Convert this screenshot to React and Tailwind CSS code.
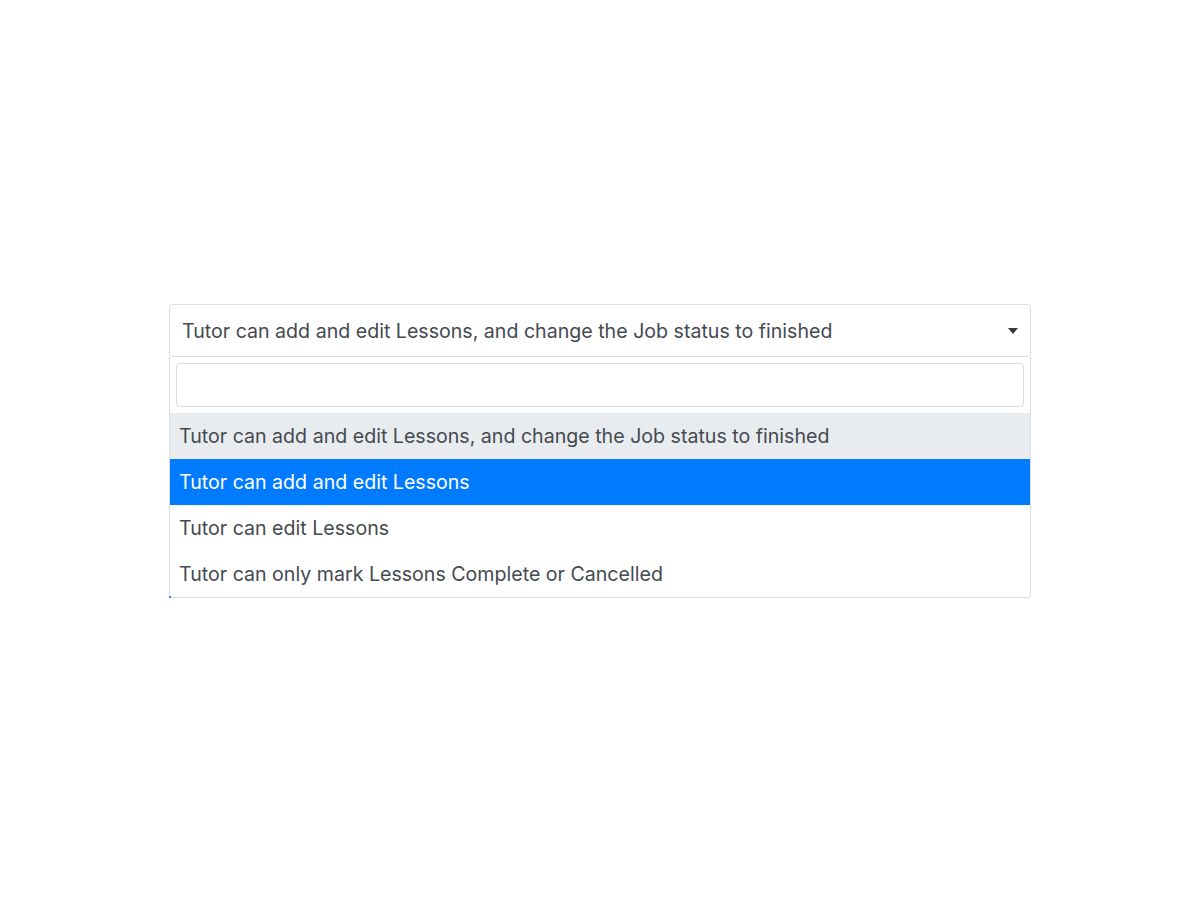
export default function App() {
  const options = [
    { t: "Tutor can add and edit Lessons, and change the Job status to finished", s: "grey" },
    { t: "Tutor can add and edit Lessons", s: "blue" },
    { t: "Tutor can edit Lessons", s: "" },
    { t: "Tutor can only mark Lessons Complete or Cancelled", s: "" },
  ];
  return (
    <div className="min-h-[900px] w-full bg-white pt-[304px]" style={{ fontFamily: "Inter, 'Noto Sans', sans-serif" }}>
      <div className="mx-auto w-[862px]">
        <div className="relative flex h-[53px] items-center rounded-[4px] border border-[#dadee2] bg-white pl-[12px] pr-[30px] pt-[2px] text-[19.6px] text-[#444a50]">
          <span>Tutor can add and edit Lessons, and change the Job status to finished</span>
          <span className="absolute right-[12px] top-[23px] h-0 w-0 border-x-[5px] border-t-[6px] border-x-transparent border-t-[#343a40]" />
        </div>
        <div className="relative rounded-b-[4px] border border-t-0 border-[#dadee2] bg-white">
          <div className="p-[6px]">
            <div className="h-[44px] rounded-[4px] border border-[#dadee2]" />
          </div>
          {options.map((o, i) => (
            <div
              key={i}
              className={
                "flex h-[46px] items-center pl-[9px] pt-[2px] text-[19.6px] " +
                (o.s === "grey"
                  ? "bg-[#e9ecef] text-[#444a50]"
                  : o.s === "blue"
                  ? "bg-[#007bff] text-white"
                  : "text-[#444a50]")
              }
            >
              {o.t}
            </div>
          ))}
          <span className="absolute -bottom-[1px] -left-[1px] h-[2px] w-[2px] bg-[#3b82f6]" />
        </div>
      </div>
    </div>
  );
}
